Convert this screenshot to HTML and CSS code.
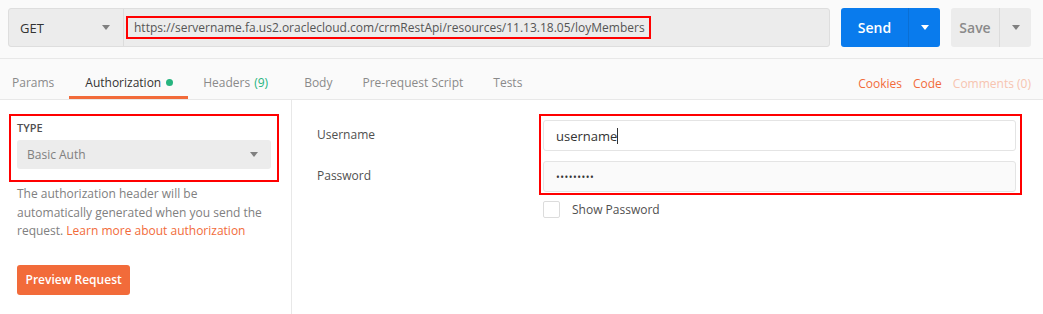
FILE: index.html
```html
<!DOCTYPE html>
<html lang="en">
<head>
   <meta charset="UTF-8">
   <title>Request - Authorization</title>
   <link rel="stylesheet" href="styles.css">
</head>
<body>
   <div class="request-bar">
       <div class="url-group">
           <div class="method">
               <span>GET</span>
               <span class="caret"></span>
           </div>
           <div class="url">
               <span class="url-text marked">https://servername.fa.us2.oraclecloud.com/crmRestApi/resources/11.13.18.05/loyMembers</span>
           </div>
       </div>
       <div class="split-btn send-btn">
           <span class="btn-main">Send</span>
           <span class="btn-arrow"><span class="caret light"></span></span>
       </div>
       <div class="split-btn save-btn">
           <span class="btn-main">Save</span>
           <span class="btn-arrow"><span class="caret"></span></span>
       </div>
   </div>

   <div class="tabs">
       <div class="tab-list">
           <span class="tab">Params</span>
           <span class="tab active">Authorization <span class="dot"></span></span>
           <span class="tab">Headers <span class="count">(9)</span></span>
           <span class="tab">Body</span>
           <span class="tab">Pre-request Script</span>
           <span class="tab">Tests</span>
       </div>
       <div class="tab-links">
           <span class="link">Cookies</span>
           <span class="link">Code</span>
           <span class="link faded">Comments (0)</span>
       </div>
   </div>

   <div class="auth">
       <div class="auth-side">
           <div class="type-box marked">
               <div class="type-label">TYPE</div>
               <div class="type-select">
                   <span>Basic Auth</span>
                   <span class="caret"></span>
               </div>
           </div>
           <p class="auth-help">The authorization header will be automatically generated when you send the request. <span class="link">Learn more about authorization</span></p>
           <button class="preview-btn">Preview Request</button>
       </div>

       <div class="auth-form">
           <div class="form-labels">
               <div class="form-label">Username</div>
               <div class="form-label">Password</div>
           </div>
           <div class="form-fields">
               <div class="field-box marked">
                   <div class="field">username<span class="cursor"></span></div>
                   <div class="field filled"><span class="dots">•••••••••</span></div>
               </div>
               <label class="check-row">
                   <span class="checkbox"></span>
                   <span>Show Password</span>
               </label>
           </div>
       </div>
   </div>
</body>
</html>
```

FILE: styles.css
```css
body {
    margin: 0;
    background: #fff;
    font-family: "Open Sans", "Liberation Sans", sans-serif;
    font-size: 12px;
    color: #505050;
}

.marked {
    border: 2px solid #ff0000;
}

.caret {
    width: 0;
    height: 0;
    border-left: 4px solid transparent;
    border-right: 4px solid transparent;
    border-top: 5px solid #808080;
}

.caret.light {
    border-top-color: #fff;
}

/* request bar */
.request-bar {
    display: flex;
    align-items: stretch;
    gap: 11px;
    padding: 8px 12px 11px 8px;
    background: #fafafa;
    border-bottom: 1px solid #e8e8e8;
}

.url-group {
    flex: 1;
    display: flex;
    height: 39px;
    box-sizing: border-box;
    background: #ececec;
    border: 1px solid #dedede;
    border-radius: 3px;
}

.method {
    width: 115px;
    box-sizing: border-box;
    display: flex;
    align-items: center;
    justify-content: space-between;
    padding: 0 13px 0 11px;
    border-right: 1px solid #dcdcdc;
    font-size: 13px;
    color: #333;
}

.url {
    flex: 1;
    display: flex;
    align-items: center;
    padding-left: 2px;
}

.url-text {
    padding: 1px 4px 1px 6px;
    color: #555;
    font-size: 12px;
    line-height: 17px;
}

.split-btn {
    display: flex;
    height: 39px;
    border-radius: 3px;
    font-size: 14px;
    font-weight: 600;
}

.btn-main, .btn-arrow {
    display: flex;
    align-items: center;
    justify-content: center;
}

.send-btn {
    background: #097bed;
    color: #fff;
}

.send-btn .btn-main {
    width: 67px;
}

.send-btn .btn-arrow {
    width: 31px;
    border-left: 1px solid #0a6fd4;
}

.save-btn {
    background: #ececec;
    color: #8a8a8a;
}

.save-btn .btn-main {
    width: 48px;
}

.save-btn .btn-arrow {
    width: 31px;
    border-left: 1px solid #dcdcdc;
}

/* tabs */
.tabs {
    display: flex;
    justify-content: space-between;
    height: 40px;
    padding: 0 12px;
    background: #fafafa;
    border-bottom: 1px solid #e8e8e8;
}

.tab-list {
    display: flex;
}

.tab {
    display: flex;
    align-items: center;
    gap: 5px;
    padding: 10px 15px 0;
    color: #8a8a8a;
    border-bottom: 3px solid transparent;
}

.tab:first-child {
    padding-left: 0;
}

.tab.active {
    color: #333;
    border-bottom-color: #f26b3a;
    padding-left: 16px;
}

.dot {
    width: 7px;
    height: 7px;
    border-radius: 50%;
    background: #26b47f;
}

.count {
    color: #26b47f;
    margin-left: -1px;
    margin-right: 6px;
}

.tab-links {
    display: flex;
    align-items: center;
    gap: 11px;
    padding-top: 8px;
}

.link {
    color: #f26b3a;
}

.link.faded {
    color: #f7c4b0;
}

/* authorization */
.auth {
    display: flex;
}

.auth-side {
    width: 292px;
    box-sizing: border-box;
    padding: 14px 12px 19px 9px;
    border-right: 1px solid #e8e8e8;
}

.type-box {
    padding: 5px 6px 11px;
}

.type-label {
    font-size: 11px;
    font-weight: 600;
    color: #505050;
    line-height: 14px;
    margin-bottom: 5px;
}

.type-select {
    height: 29px;
    display: flex;
    align-items: center;
    justify-content: space-between;
    padding: 0 13px 0 10px;
    background: #ececec;
    border-radius: 3px;
    color: #808080;
}

.auth-help {
    margin: 3px 0 0 8px;
    width: 258px;
    color: #808080;
    line-height: 18.5px;
}

.preview-btn {
    margin: 24px 0 0 8px;
    height: 30px;
    padding: 0 8.5px;
    background: #f26b3a;
    color: #fff;
    border: none;
    border-radius: 3px;
    font-family: inherit;
    font-size: 12px;
    font-weight: 600;
}

.auth-form {
    flex: 1;
    display: flex;
    padding: 14px 21px 0 25px;
}

.form-labels {
    width: 222px;
}

.form-label {
    height: 41px;
    display: flex;
    align-items: center;
    color: #505050;
}

.form-fields {
    flex: 1;
}

.field-box {
    display: flex;
    flex-direction: column;
    gap: 10px;
    padding: 4px 4px 1px 2px;
}

.field {
    height: 31px;
    box-sizing: border-box;
    display: flex;
    align-items: center;
    padding: 0 12px;
    background: #fff;
    border: 1px solid #e4e4e4;
    border-radius: 3px;
    color: #333;
    font-size: 13px;
}

.field.filled {
    background: #fafafa;
}

.cursor {
    width: 1px;
    height: 16px;
    background: #333;
}

.dots {
    font-size: 10px;
    letter-spacing: 0.5px;
    color: #333;
}

.check-row {
    display: flex;
    align-items: center;
    gap: 12px;
    margin: 6px 0 0 4px;
    color: #505050;
}

.checkbox {
    width: 17px;
    height: 17px;
    box-sizing: border-box;
    border: 1px solid #dcdcdc;
    border-radius: 2px;
    background: #fff;
}
```
